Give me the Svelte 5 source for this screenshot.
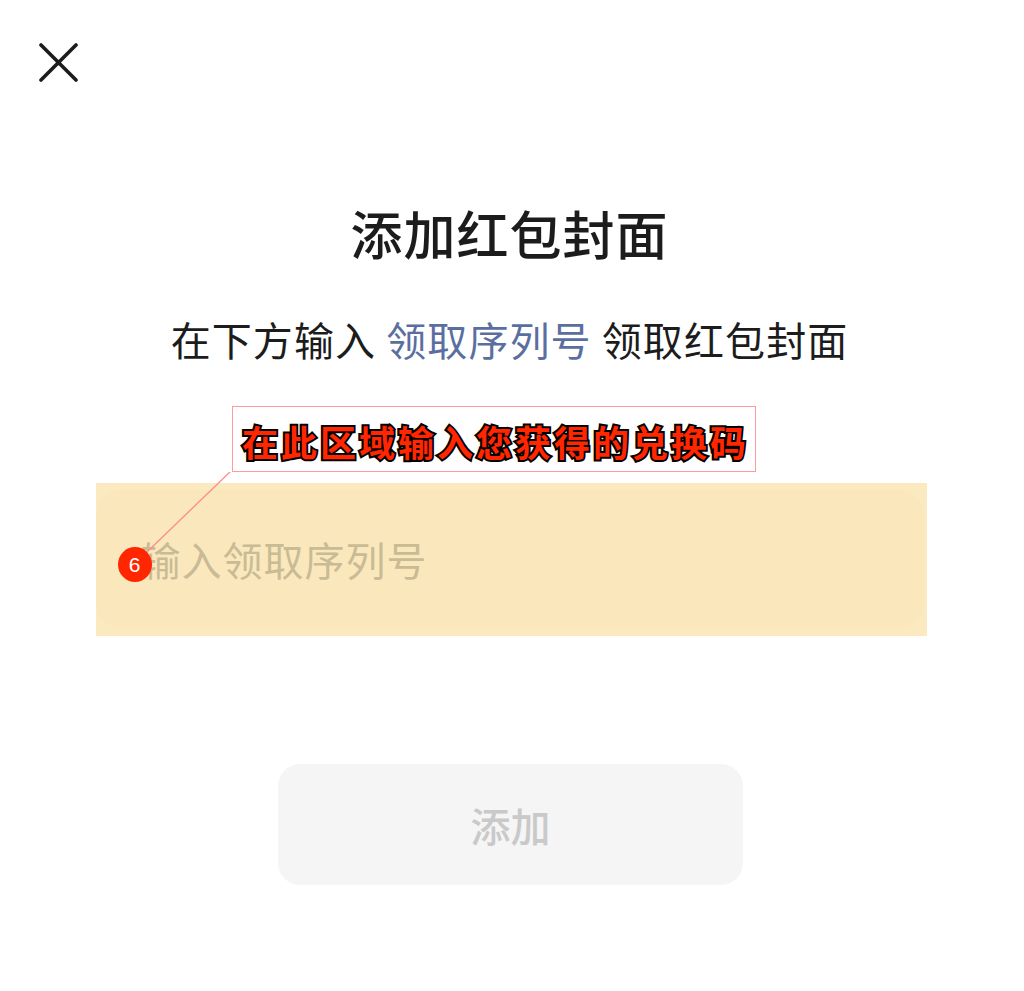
<script>
  const title = '添加红包封面';
</script>

<div class="page">
  <button class="close" aria-label="关闭">
    <svg width="40" height="40" viewBox="0 0 40 40"><path d="M2 2 L37 37 M37 2 L2 37" fill="none" stroke="#1c1c1c" stroke-width="3.6" stroke-linecap="round"/></svg>
  </button>
  <h1>{title}</h1>
  <p class="sub">在下方输入 <span class="link">领取序列号</span> 领取红包封面</p>
  <div class="band">
    <div class="field">输入领取序列号</div>
    <svg class="leader" width="100" height="90" viewBox="0 0 100 90"><path d="M99 -1 L16 79" fill="none" stroke="#ff8a8a" stroke-width="1.3"/></svg>
    <span class="badge">6</span>
    <div class="callout">在此区域输入您获得的兑换码</div>
  </div>
  <div class="btn">添加</div>
</div>

<style>
  :global(body) { margin: 0; background: #fff; }
  .page {
    width: 1024px; height: 991px; box-sizing: border-box; position: relative;
    display: flex; flex-direction: column; align-items: center; padding-top: 204px;
    font-family: "Noto Sans CJK SC", "Noto Sans", sans-serif; overflow: hidden;
  }
  .close { position: absolute; left: 39px; top: 43px; padding: 0; border: 0; background: none; width: 40px; height: 40px; }
  .close svg { display: block; }
  h1 { margin: 0 0 0 -5px; font-size: 52px; line-height: 58px; font-weight: 500; letter-spacing: 1px; color: #1c1c1c; }
  .sub { margin: 50px 0 0 -5px; font-size: 40px; line-height: 54px; font-weight: 400; color: #1c1c1c; white-space: nowrap; letter-spacing: 1.1px; }
  .link { color: #5a6f9f; }
  .band {
    position: relative; margin: 117px 0 0 -2px; width: 831px; height: 153px; background: #fbeac0;
    box-sizing: border-box; padding: 7px 3px 8px 0;
  }
  .field {
    height: 100%; background: #fae8bc; border-radius: 24px; box-sizing: border-box;
    padding: 0 0 0 45px; display: flex; align-items: center;
    font-size: 40px; color: #c9bb96; font-weight: 400; letter-spacing: 1px;
  }
  .leader { position: absolute; left: 36px; top: -11px; }
  .badge {
    position: absolute; left: 22px; top: 64px; width: 34px; height: 35px; border-radius: 50%;
    background: #ff2600; color: #fff; font: 21px/35px "Liberation Sans", sans-serif; text-align: center;
  }
  .callout {
    position: absolute; left: 136px; top: -77px; width: 524px; height: 66px; box-sizing: border-box;
    background: #fff; border: 1px solid #ff9a9f; display: flex; align-items: center; justify-content: center;
    font-size: 36px; font-weight: 700; letter-spacing: 3px; color: #ff2600; white-space: nowrap;
    -webkit-text-stroke: 4px #000; paint-order: stroke fill; font-family: "Noto Sans CJK SC", sans-serif;
    padding: 3px 0 0 4px;
  }
  .btn {
    margin: 128px 0 0 -3px; width: 465px; height: 121px; background: #f5f5f5; border-radius: 22px;
    display: flex; align-items: center; justify-content: center;
    font-size: 40px; color: #c9c9c9; font-weight: 500;
  }
</style>
